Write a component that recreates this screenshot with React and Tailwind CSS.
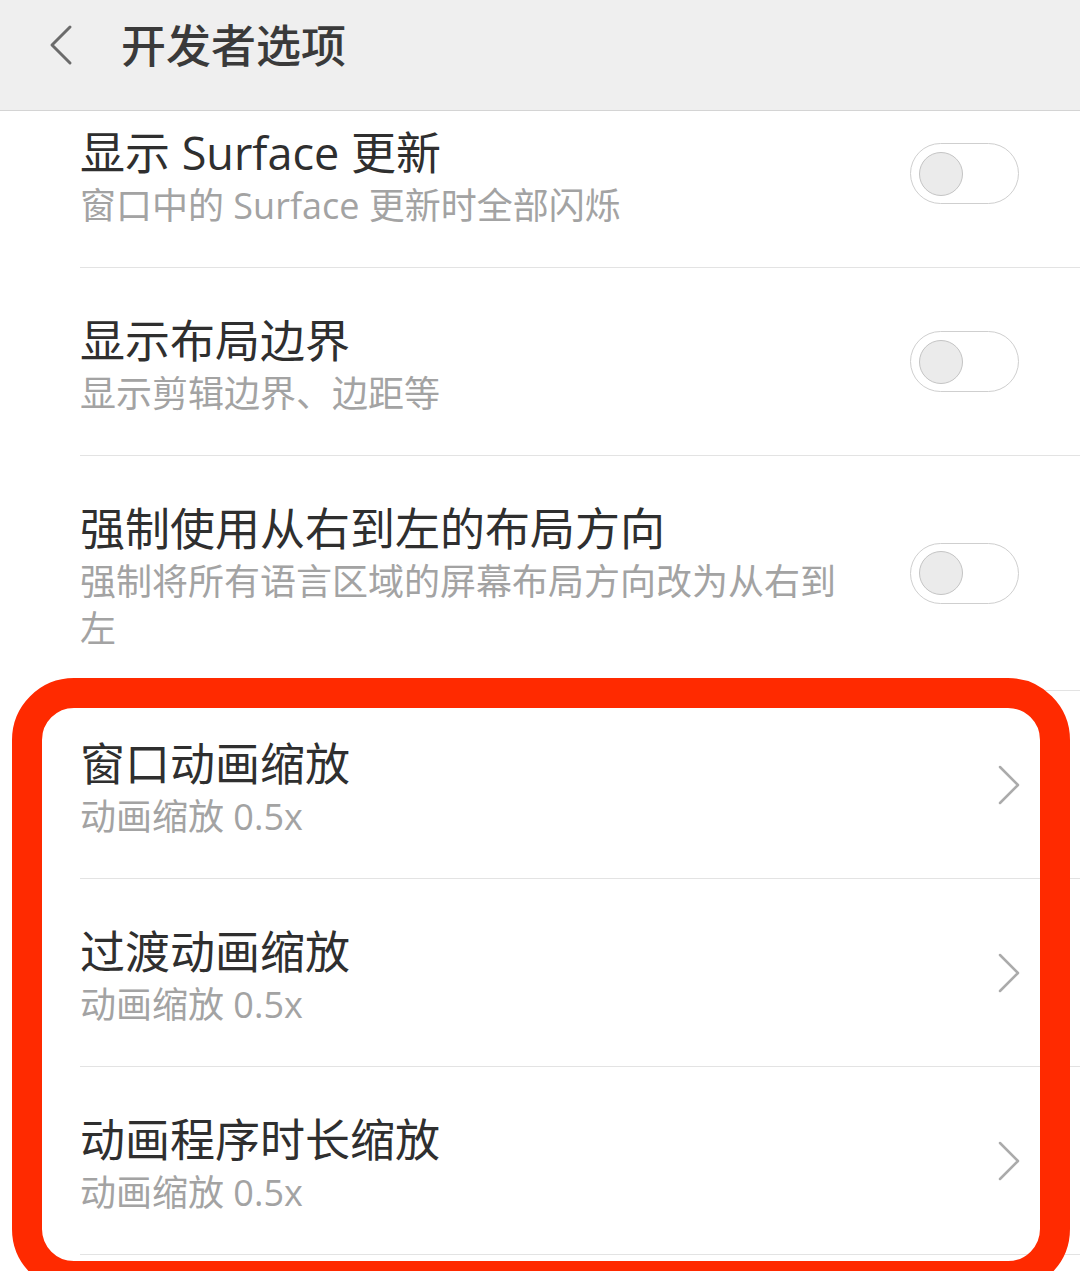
import React from 'react';

const rows = [
  { title: '显示 Surface 更新', sub: '窗口中的 Surface 更新时全部闪烁', kind: 'toggle' },
  { title: '显示布局边界', sub: '显示剪辑边界、边距等', kind: 'toggle' },
  { title: '强制使用从右到左的布局方向', sub: '强制将所有语言区域的屏幕布局方向改为从右到左', kind: 'toggle' },
  { title: '窗口动画缩放', sub: '动画缩放 0.5x', kind: 'link' },
  { title: '过渡动画缩放', sub: '动画缩放 0.5x', kind: 'link' },
  { title: '动画程序时长缩放', sub: '动画缩放 0.5x', kind: 'link' },
];

function Toggle() {
  return (
    <div className="flex h-[61px] w-[109px] shrink-0 items-center rounded-full border border-[#cfcfcf] bg-white pl-[8px]">
      <div className="h-[44px] w-[44px] rounded-full border border-[#c4c4c4] bg-[#ebebeb]" />
    </div>
  );
}

function Chevron() {
  return (
    <svg width="24" height="40" viewBox="0 0 24 40" className="shrink-0 mr-[-2px]">
      <path d="M3 2 L21 20 L3 38" fill="none" stroke="#ababab" strokeWidth="2.5" strokeLinecap="round" strokeLinejoin="round" />
    </svg>
  );
}

function Row({ row }) {
  return (
    <div className="ml-[80px] flex items-center border-b border-[#e3e3e3] pr-[61px]">
      <div className="flex-1 pt-[47px] pb-[38px] pr-[60px]">
        <div className="text-[45px] leading-[52px] text-[#2f2f2f]">{row.title}</div>
        <div className="mt-[3px] text-[36px] leading-[47px] text-[#a3a3a3]">{row.sub}</div>
      </div>
      {row.kind === 'toggle' ? <Toggle /> : <Chevron />}
    </div>
  );
}

export default function App() {
  return (
    <div
      className="relative h-[1271px] w-[1080px] overflow-hidden bg-white"
      style={{ fontFamily: '"Open Sans", "Noto Sans CJK SC", sans-serif' }}
    >
      <div className="relative z-10 flex h-[111px] items-center border-b border-[#d4d4d4] bg-[#efefef]">
        <svg width="30" height="42" viewBox="0 0 30 42" className="ml-[45px] mt-[-20px]">
          <path d="M25 3 L7 21 L25 39" fill="none" stroke="#6b6b6b" strokeWidth="3" strokeLinecap="round" strokeLinejoin="round" />
        </svg>
        <div className="ml-[46px] mt-[-18px] text-[45px] font-medium text-[#3a3a3a]">开发者选项</div>
      </div>

      <div className="mt-[-31px]">
        {rows.map((row, i) => (
          <Row key={i} row={row} />
        ))}
      </div>

      <div className="pointer-events-none absolute left-[12px] top-[678px] h-[613px] w-[1058px] rounded-[62px] border-[30px] border-[#ff2a00]" />
    </div>
  );
}
